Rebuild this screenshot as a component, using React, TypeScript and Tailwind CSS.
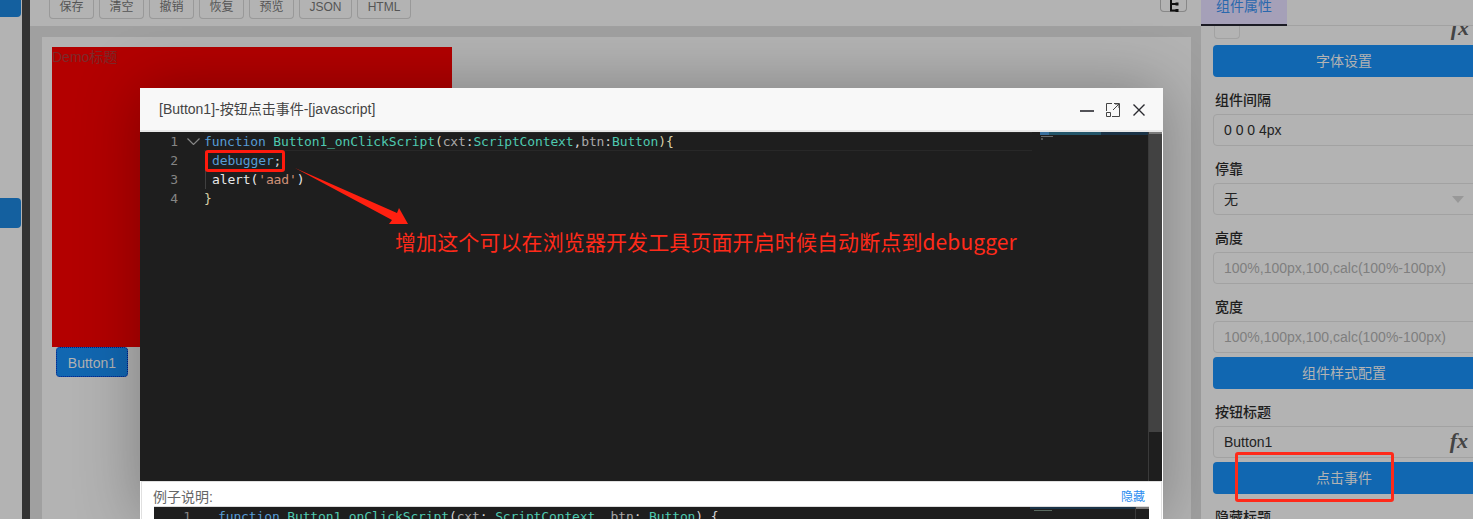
const sans = "font-['Liberation_Sans','Noto_Sans_CJK_SC',sans-serif]";
const mono = "font-['DejaVu_Sans_Mono','Noto_Sans_CJK_SC',monospace]";

const toolButtons = [
    { text: "保存", width: "w-[45px]" },
    { text: "清空", width: "w-[45px]" },
    { text: "撤销", width: "w-[45px]" },
    { text: "恢复", width: "w-[45px]" },
    { text: "预览", width: "w-[45px]" },
    { text: "JSON", width: "w-[53px]" },
    { text: "HTML", width: "w-[54px]" },
];

const Fx = ({ className }: { className: string }) => (
    <span className={`absolute right-[14px] font-['Liberation_Serif',serif] italic font-bold text-[22px] leading-[22px] text-[#444] select-none ${className}`}>fx</span>
);

const Label = ({ text }: { text: string }) => (
    <div className="h-5 mt-[13px] mb-1 pl-[2px] text-sm font-medium leading-5 text-[#1e1e1e]">{text}</div>
);

const BlueButton = ({ text }: { text: string }) => (
    <div className="h-8 mt-1 pr-2 flex items-center justify-center rounded-[4px] bg-[#1167b1] text-sm text-[#b3b3b3]">{text}</div>
);

const TextBox = ({ text, hint, children }: { text?: string; hint?: string; children?: React.ReactNode }) => (
    <div className="relative h-8 pl-[10px] flex items-center rounded-[4px] border border-[#a2a2a2] text-sm">
        {text && <span className="text-[#222]">{text}</span>}
        {hint && <span className="text-[#7f7f7f]">{hint}</span>}
        {children}
    </div>
);

const Sidebar = () => (
    <div className="w-[22px] shrink-0 bg-[#b3b3b3] flex flex-col">
        <div className="w-[21px] h-[17px] bg-[#14609f] rounded-br-[4px]"></div>
        <div className="w-[21px] h-[30px] mt-[181px] bg-[#14609f] rounded-r-[4px]"></div>
    </div>
);

const Toolbar = () => (
    <div className="h-[26px] shrink-0 bg-[#b3b3b3] pl-[19px] pr-[14px] flex items-start justify-between">
        <div className="flex gap-[5px]">
            {toolButtons.map((b) => (
                <div key={b.text} className={`h-5 -mt-px pb-[3px] flex items-center justify-center rounded-b-[4px] border border-t-0 border-[#999] text-xs text-[#555] ${b.width}`}>{b.text}</div>
            ))}
        </div>
        <div className="w-[27px] h-3 flex justify-center rounded-b-[4px] border border-t-0 border-[#888]">
            <svg width="10" height="12" viewBox="0 0 10 12" fill="none" stroke="#111" strokeWidth="2">
                <path d="M2 0v10.5h6M2 4h6" />
                <rect x="6.5" y="2.5" width="3" height="3" fill="#111" stroke="none" />
                <rect x="6.5" y="9" width="3" height="3" fill="#111" stroke="none" />
            </svg>
        </div>
    </div>
);

const Canvas = () => (
    <div className="flex-1 bg-[#a0a0a0] pt-[11px] pl-3 pr-[10px]">
        <div className="h-full bg-[#b3b3b3] pl-[10px] pt-[10px]">
            <div className="w-[400px] h-[300px] bg-[#b30000] text-sm leading-5 text-[#7d2a2a]">Demo标题</div>
            <div className="w-[72px] h-[30px] ml-1 pt-px flex items-center justify-center rounded-[4px] border border-dotted border-[#00188a] bg-[#1167b1] text-sm text-[#b3b3b3]">Button1</div>
        </div>
    </div>
);

const PropsPanel = () => (
    <div className="relative z-20 w-[272px] shrink-0 bg-[#b3b3b3] overflow-hidden flex flex-col">
        <div className="h-[26px] shrink-0 border-b border-[#a2a2a2]">
            <div className="w-[86px] h-[26px] pb-3 flex items-center justify-center bg-[#a5a0b8] border-b-2 border-[#1b1b24] text-sm text-[#2a68ad]">组件属性</div>
        </div>
        <div className="w-[270px] ml-3 flex flex-col">
            <div className="relative h-[14px] overflow-hidden">
                <div className="w-[26px] h-[13px] ml-px rounded-b-[4px] border border-t-0 border-[#a2a2a2]"></div>
                <Fx className="bottom-px" />
            </div>
            <div className="h-px"></div>
            <BlueButton text="字体设置" />
            <Label text="组件间隔" />
            <TextBox text="0 0 0 4px" />
            <Label text="停靠" />
            <TextBox text="无">
                <svg className="absolute right-[18px] top-[12px]" width="12" height="7" viewBox="0 0 12 7">
                    <path d="M0 0h12L6 7z" fill="#989898" />
                </svg>
            </TextBox>
            <Label text="高度" />
            <TextBox hint="100%,100px,100,calc(100%-100px)" />
            <Label text="宽度" />
            <TextBox hint="100%,100px,100,calc(100%-100px)" />
            <BlueButton text="组件样式配置" />
            <Label text="按钮标题" />
            <TextBox text="Button1">
                <Fx className="bottom-[5px]" />
            </TextBox>
            <BlueButton text="点击事件" />
            <Label text="隐藏标题" />
        </div>
    </div>
);

const Minimap = () => (
    <div className="w-[108px] shrink-0 flex flex-col">
        <div className="h-[3px] flex bg-[#1b3448]">
            <div className="w-[9px] bg-[#3a6f9c]"></div>
            <div className="w-[52px] bg-[#24566a]"></div>
        </div>
        <div className="ml-[1px] mt-px w-[12px] h-px bg-[#6b6b6b]"></div>
        <div className="ml-[1px] mt-px w-[2px] h-[2px] bg-[#555]"></div>
    </div>
);

const LineNumbers = ({ lines }: { lines: number[] }) => (
    <div className="w-[38px] shrink-0 text-right">
        {lines.map((n) => (
            <div key={n} className="h-[19px]">{n}</div>
        ))}
    </div>
);

const MainEditor = () => (
    <div className={`h-[349px] flex bg-[#1e1e1e] text-[13px] leading-[19px] tracking-[-0.13px] ${mono}`}>
        <div className="w-[64px] shrink-0 flex text-[#858585]">
            <LineNumbers lines={[1, 2, 3, 4]} />
            <svg className="ml-[9px] mt-[6px]" width="13" height="7" viewBox="0 0 13 7" fill="none" stroke="#858585" strokeWidth="1.2">
                <path d="M0.5 0.5L6.5 6.5L12.5 0.5" />
            </svg>
        </div>
        <div className="flex-1 text-[#d4d4d4]">
            <div className="h-[19px] w-[828px] border-y border-[#282828] leading-[17px] whitespace-pre">
                <span className="text-[#569cd6]">function</span> <span className="text-[#4ec9b0]">Button1_onClickScript</span>
                <span className="text-[#d8d0a8]">(</span><span className="text-[#a8a8a8]">cxt</span>:<span className="text-[#4ec9b0]">ScriptContext</span>,<span className="text-[#a8a8a8]">btn</span>:<span className="text-[#4ec9b0]">Button</span><span className="text-[#d8d0a8]">){"{"}</span>
            </div>
            <div className="h-[38px] ml-px pl-[6px] border-l border-[#404040]">
                <div className="h-[19px] whitespace-pre"><span className="text-[#569cd6]">debugger</span>;</div>
                <div className="h-[19px] whitespace-pre text-[#e8e8e8]">alert(<span className="text-[#ce9178]">'aad'</span>)</div>
            </div>
            <div className="h-[19px] text-[#d8d0a8]">{"}"}</div>
        </div>
        <Minimap />
        <div className="w-[14px] shrink-0 border-l border-[#3a3a3a] flex flex-col">
            <div className="h-[2px] bg-[#7a7a7a]"></div>
            <div className="h-[298px] bg-[#424242]"></div>
        </div>
    </div>
);

const ExampleEditor = () => (
    <div className={`h-[30px] mx-3 flex border-t border-[#dcdcdc] bg-[#1e1e1e] text-[13px] leading-[19px] tracking-[-0.13px] whitespace-pre ${mono}`}>
        <div className="w-[64px] shrink-0 text-[#858585]">
            <div className="w-[37px] text-right">1</div>
        </div>
        <div className="flex-1 text-[#d4d4d4]">
            <span className="text-[#569cd6]">function</span> <span className="text-[#4ec9b0]">Button1_onClickScript</span>(<span className="text-[#a8a8a8]">cxt</span>: <span className="text-[#4ec9b0]">ScriptContext</span>, <span className="text-[#a8a8a8]">btn</span>: <span className="text-[#4ec9b0]">Button</span>) {"{"}
        </div>
        <div className="w-[105px] shrink-0 flex flex-col">
            <div className="h-[2px] bg-[#1b3448]"></div>
            <div className="ml-[4px] mt-[1px] w-[18px] h-px bg-[#5a6a60]"></div>
        </div>
        <div className="w-[14px] shrink-0 border-l border-[#3a3a3a]">
            <div className="h-[2px] bg-[#7a7a7a]"></div>
        </div>
    </div>
);

const Modal = () => (
    <div className="absolute z-10 left-[140px] top-[88px] w-[1023px] h-[431px] overflow-hidden flex flex-col bg-white shadow-[0_0_60px_rgba(0,0,0,0.3)]">
        <div className="h-[44px] shrink-0 bg-[#f8f8f8] border-b-2 border-[#e8e8e8] pl-[19px] pr-[17px] flex items-center justify-between">
            <span className="text-sm text-[#444]">[Button1]-按钮点击事件-[javascript]</span>
            <div className="mt-[2px] flex items-center gap-3">
                <svg width="14" height="14" viewBox="0 0 14 14" fill="none" stroke="#2a2a30" strokeWidth="1.6">
                    <path d="M0 8h14" />
                </svg>
                <svg width="14" height="14" viewBox="0 0 14 14" fill="none" stroke="#444" strokeWidth="1">
                    <path d="M6 0.5H0.5V8M8 0.5h5.5V13.5H6M0.5 9.5h4v4h-4zM7 7l6-6M9 1h4v4" />
                </svg>
                <svg width="14" height="14" viewBox="0 0 14 14" fill="none" stroke="#2a2a30" strokeWidth="1.4">
                    <path d="M1.5 1.5l11 11M12.5 1.5l-11 11" />
                </svg>
            </div>
        </div>
        <div className="pr-px">
            <MainEditor />
        </div>
        <div className="flex-1 mx-px border-t border-x border-[#e0e0e0]">
            <div className="h-6 pt-[6px] pl-[11px] pr-[16px] flex items-center justify-between">
                <span className="text-sm text-[#666]">例子说明:</span>
                <span className="text-xs text-[#2a8cf0]">隐藏</span>
            </div>
            <ExampleEditor />
        </div>
    </div>
);

// red marks drawn on top of the screenshot
const Annotations = () => (
    <>
        <div className="absolute z-30 left-[205px] top-[150px] w-[80px] h-[22px] rounded-[3px] border-[3px] border-[#ff1a0d]"></div>
        <svg className="absolute z-30 left-[290px] top-[165px]" width="125" height="65" viewBox="290 165 125 65">
            <polygon points="295,168 397,213 399,208 408,224 389,224 392,220" fill="#ff2010" />
        </svg>
        <div className="absolute z-30 left-[395px] top-[227px] text-[21px] leading-[28px] tracking-[0.1px] whitespace-nowrap text-[#ff2a1a] font-['Noto_Sans_CJK_SC',sans-serif]">增加这个可以在浏览器开发工具页面开启时候自动断点到debugger</div>
        <div className="absolute z-30 left-[1235px] top-[452px] w-[159px] h-[50px] rounded-[3px] border-[3px] border-[#ff2a1a]"></div>
    </>
);

export default function App() {
    return (
        <div className={`relative w-[1473px] h-[519px] overflow-hidden flex ${sans}`}>
            <Sidebar />
            <div className="w-2 shrink-0 bg-[#333]"></div>
            <div className="flex-1 flex flex-col">
                <Toolbar />
                <Canvas />
            </div>
            <PropsPanel />
            <Modal />
            <Annotations />
        </div>
    );
}
